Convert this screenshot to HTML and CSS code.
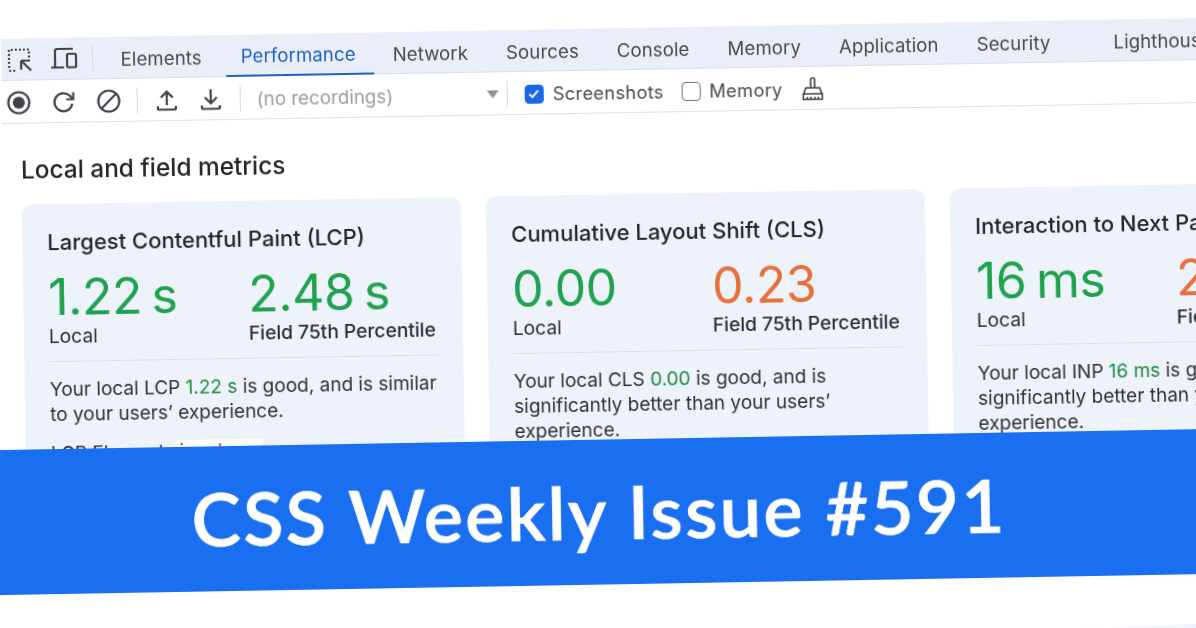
FILE: index.html
```html
<!DOCTYPE html>
<html lang="en">
<head>
<meta charset="utf-8">
<title>CSS Weekly Issue #591</title>
<link rel="stylesheet" href="styles.css">
</head>
<body>
<div class="stage">
  <nav class="tabbar">
    <svg class="ico ico-inspect" viewBox="0 0 26 26" aria-hidden="true"><path class="dots" d="M2 21V3h20v9M2 24h8"/><path class="line" d="M14 14h9M14 14l10 10M14 14v9" /></svg>
    <svg class="ico ico-device" viewBox="0 0 28 24" aria-hidden="true"><path class="line" d="M23 2H7a2 2 0 0 0-2 2v16M1 20.500h13"/><rect class="line" x="17" y="7" width="9" height="13.500" rx="1.500"/></svg>
    <span class="sep sep-top"></span>
    <a class="tab">Elements</a>
    <a class="tab active">Performance</a>
    <a class="tab">Network</a>
    <a class="tab">Sources</a>
    <a class="tab">Console</a>
    <a class="tab">Memory</a>
    <a class="tab">Application</a>
    <a class="tab">Security</a>
    <a class="tab tab-last">Lighthouse</a>
  </nav>
  <div class="toolbar">
    <svg class="tool" viewBox="0 0 24 24" aria-hidden="true"><circle class="line" cx="12" cy="12" r="10.500"/><circle class="fill" cx="12" cy="12" r="6"/></svg>
    <svg class="tool" viewBox="0 0 24 24" aria-hidden="true"><path class="line" d="M20.500 14a9 9 0 1 1-2.600-8.200L21 9"/><path class="line" d="M21.500 2.500V9.500H14.500"/></svg>
    <svg class="tool" viewBox="0 0 24 24" aria-hidden="true"><circle class="line" cx="12" cy="12" r="10.500"/><path class="line" d="M5 19L19 5"/></svg>
    <span class="sep sep-a"></span>
    <svg class="tool tool-up" viewBox="0 0 24 24" aria-hidden="true"><path class="line" d="M12 17V4M6 9.500L12 3.500l6 6M3 18v2a1.500 1.500 0 0 0 1.500 1.500h15A1.500 1.500 0 0 0 21 20v-2"/></svg>
    <svg class="tool" viewBox="0 0 24 24" aria-hidden="true"><path class="line" d="M12 2v14M6 10l6 6 6-6M3 18v2a1.500 1.500 0 0 0 1.500 1.500h15A1.500 1.500 0 0 0 21 20v-2"/></svg>
    <span class="sep sep-b"></span>
    <span class="select">(no recordings)</span>
    <span class="caret"></span>
    <span class="sep sep-c"></span>
    <span class="check on"><svg viewBox="0 0 20 20" aria-hidden="true"><path d="M4.500 10.500l3.800 3.800 7.200-8.300"/></svg></span>
    <span class="opt">Screenshots</span>
    <span class="check"></span>
    <span class="opt">Memory</span>
    <svg class="tool tool-brush" viewBox="0 0 24 24" aria-hidden="true"><path class="thin" d="M10 11V3a2 2 0 0 1 4 0v8M5 11h14l2 6H3zM2.500 17h19v5.500h-19z"/><path class="thin" d="M6.500 20v2M10 20v2M14 20v2M17.500 20v2"/></svg>
  </div>
  <main class="main">
    <h2 class="heading">Local and field metrics</h2>
    <div class="cards">
      <section class="card">
        <h3 class="card-title">Largest Contentful Paint (LCP)</h3>
        <div class="values">
          <div class="col"><div class="num good">1.22 s</div><div class="lab">Local</div></div>
          <div class="col"><div class="num good">2.48 s</div><div class="lab">Field 75th Percentile</div></div>
        </div>
        <p class="desc">Your local LCP <b class="ok">1.22 s</b> is good, and is similar to your users’ experience.</p>
        <p class="desc el">LCP Element: <span class="chip">img.hero</span></p>
      </section>
      <section class="card">
        <h3 class="card-title">Cumulative Layout Shift (CLS)</h3>
        <div class="values">
          <div class="col"><div class="num good">0.00</div><div class="lab">Local</div></div>
          <div class="col"><div class="num warn">0.23</div><div class="lab">Field 75th Percentile</div></div>
        </div>
        <p class="desc">Your local CLS <b class="ok">0.00</b> is good, and is significantly better than your users’ experience.</p>
      </section>
      <section class="card">
        <h3 class="card-title">Interaction to Next Paint (INP)</h3>
        <div class="values">
          <div class="col"><div class="num good">16 ms</div><div class="lab">Local</div></div>
          <div class="col"><div class="num warn">216 ms</div><div class="lab">Field 75th Percentile</div></div>
        </div>
        <p class="desc">Your local INP <b class="ok">16 ms</b> is good, and is significantly better than your users’ experience.</p>
      </section>
    </div>
    <div class="next"></div>
  </main>
  <div class="banner"><h1 class="banner-text">CSS Weekly Issue #591</h1></div>
</div>
</body>
</html>
```

FILE: styles.css
```css
html, body {
  margin: 0;
  height: 100%;
  background: #fff;
  overflow: hidden;
}
.stage {
  width: 1300px;
  padding-top: 39px;
  position: relative;
  transform: rotate(-1deg);
  transform-origin: 0 0;
  font-family: Inter, "Liberation Sans", sans-serif;
  color: #25272b;
  filter: blur(0.45px);
}
.tabbar {
  height: 42px;
  display: flex;
  align-items: center;
  background: #e9eef8;
  border-bottom: 1px solid #d4deee;
  box-sizing: border-box;
  padding-left: 6px;
}
.ico { flex: none; }
.ico-inspect { width: 26px; height: 26px; }
.ico-device { width: 28px; height: 24px; margin-left: 17px; }
.line, .dots, .thin {
  fill: none;
  stroke: #3f4349;
  stroke-width: 2.2;
}
.dots { stroke-dasharray: 2 2; }
.thin { stroke-width: 1.6; }
.fill { fill: #3f4349; }
.sep {
  flex: none;
  width: 1px;
  background: #d5dae3;
}
.sep-top { height: 26px; margin: 0 8.500px 0 14px; }
.tab {
  flex: none;
  height: 100%;
  display: flex;
  align-items: center;
  box-sizing: border-box;
  padding: 2px 19px 0;
  font-size: 18.600px;
  letter-spacing: 0.1px;
  color: #474a50;
  white-space: nowrap;
}
.tab.active {
  color: #1b62c4;
  padding: 2px 18px 0 15px;
  border-bottom: 2px solid #1b62c4;
  margin-bottom: -1px;
  margin-left: 5px;
}
.tab-last { margin-left: 25px; }
.toolbar {
  height: 43px;
  display: flex;
  align-items: center;
  border-bottom: 1px solid #d8e1f0;
  box-sizing: border-box;
  padding: 2px 0 0 5px;
}
.tool {
  flex: none;
  width: 24px;
  height: 24px;
  margin-right: 21px;
}
.tool-up { margin-right: 20px; }
.tool-brush { margin: 0 0 0 18px; }
.sep-a { height: 26px; margin: 0 17px 0 -5px; }
.sep-b { height: 26px; margin: 0 16px 0 -4px; }
.sep-c { height: 26px; margin: 0 17px 0 8px; }
.select {
  width: 230px;
  font-size: 18.800px;
  color: #9a9da3;
  white-space: nowrap;
}
.caret {
  width: 0;
  height: 0;
  border-left: 6px solid transparent;
  border-right: 6px solid transparent;
  border-top: 8px solid #8f9399;
}
.check {
  flex: none;
  width: 19px;
  height: 19px;
  box-sizing: border-box;
  border: 1.500px solid #6f7278;
  border-radius: 4px;
  margin-right: 9px;
}
.check.on {
  background: #1a68e8;
  border-color: #1a68e8;
}
.check svg {
  display: block;
  width: 16px;
  height: 16px;
  fill: none;
  stroke: #fff;
  stroke-width: 2.4;
}
.opt {
  font-size: 18.300px;
  letter-spacing: 0.3px;
  color: #474a50;
  margin-right: 17.500px;
}
.opt + .check + .opt { margin-right: 0; }
.main { padding: 0 0 0 18px; }
.heading {
  margin: 0;
  padding-top: 31px;
  height: 50px;
  font-size: 24.400px;
  line-height: 30px;
  font-weight: 500;
  color: #24262a;
}
.cards {
  display: flex;
  gap: 25px;
}
.card {
  flex: none;
  width: 439px;
  height: 290px;
  box-sizing: border-box;
  overflow: hidden;
  background: #eef3fb;
  border-radius: 10px;
  padding: 24px 20px 0 25px;
}
.card-title {
  margin: 0;
  font-size: 22px;
  line-height: 28px;
  font-weight: 500;
  color: #24262a;
  white-space: nowrap;
}
.values {
  display: flex;
  margin-top: 13px;
}
.col { flex: none; width: 200px; white-space: nowrap; }
.num {
  font-size: 50px;
  line-height: 56px;
  font-weight: 400;
  letter-spacing: -0.5px;
  word-spacing: -4px;
}
.good { color: #1fa24e; }
.warn { color: #e8703a; }
.lab {
  font-size: 19.200px;
  line-height: 22px;
  font-weight: 500;
  color: #2b2d31;
}
.col:first-child .lab { font-weight: 400; }
.desc {
  margin: 0;
  font-size: 19px;
  line-height: 25px;
  color: #2f3135;
}
.values + .desc {
  margin-top: 14px;
  padding-top: 15px;
  margin-right: 4px;
  border-top: 1px solid #d5e0f3;
}
.ok { color: #1e8a3e; font-weight: 400; }
.el { margin-top: 14px; }
.chip { background: #fbfdff; color: #d33; padding: 0 4px; }
.next {
  margin: 150px 0 0 1052px;
  height: 30px;
  background: linear-gradient(90deg, #fff, #dfe6f2);
}
.banner {
  position: absolute;
  top: 450px;
  left: -20px;
  width: 1220px;
  height: 145px;
  box-sizing: border-box;
  padding-bottom: 2px;
  display: flex;
  align-items: center;
  justify-content: center;
  background: #1a6ff0;
}
.banner-text {
  margin: 0;
  font-family: Lato, "Open Sans", sans-serif;
  font-size: 74px;
  line-height: 90px;
  font-weight: 600;
  letter-spacing: 2.300px;
  -webkit-text-stroke: 0.7px #fff;
  color: #fff;
  white-space: nowrap;
}
```
